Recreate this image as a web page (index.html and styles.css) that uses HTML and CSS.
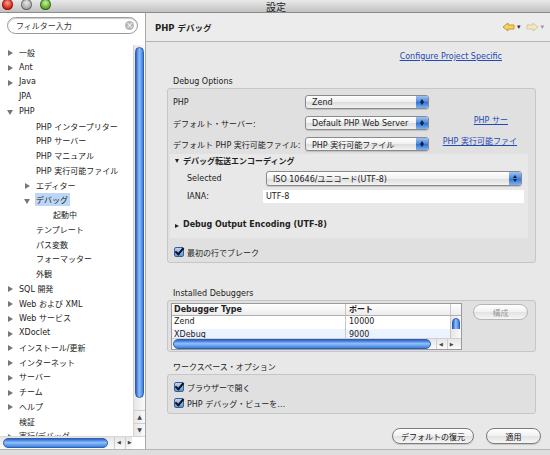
FILE: index.html
```html
<!DOCTYPE html>
<html>
<head>
    <title>設定</title>
    <meta charset="utf-8">
    <link rel="stylesheet" href="styles.css">
</head>
<body>
    <div class="window">
        <div class="titlebar">
            <div class="lights">
                <span class="light red"></span>
                <span class="light yellow"></span>
                <span class="light green"></span>
            </div>
            <div class="title">設定</div>
        </div>

        <div class="panes">
            <div class="sidebar">
                <div class="search">
                    <span class="search-text">フィルター入力</span>
                    <span class="search-clear">&times;</span>
                </div>

                <div class="tree-area">
                    <div class="tree">
                        <div class="row l0"><span class="arrow closed"></span><span class="label">一般</span></div>
                        <div class="row l0"><span class="arrow closed"></span><span class="label">Ant</span></div>
                        <div class="row l0"><span class="arrow closed"></span><span class="label">Java</span></div>
                        <div class="row l0"><span class="arrow"></span><span class="label">JPA</span></div>
                        <div class="row l0"><span class="arrow open"></span><span class="label">PHP</span></div>
                        <div class="row l1"><span class="arrow"></span><span class="label">PHP インタープリター</span></div>
                        <div class="row l1"><span class="arrow"></span><span class="label">PHP サーバー</span></div>
                        <div class="row l1"><span class="arrow"></span><span class="label">PHP マニュアル</span></div>
                        <div class="row l1"><span class="arrow"></span><span class="label">PHP 実行可能ファイル</span></div>
                        <div class="row l1"><span class="arrow closed"></span><span class="label">エディター</span></div>
                        <div class="row l1"><span class="arrow open"></span><span class="label selected">デバッグ</span></div>
                        <div class="row l2"><span class="arrow"></span><span class="label">起動中</span></div>
                        <div class="row l1"><span class="arrow"></span><span class="label">テンプレート</span></div>
                        <div class="row l1"><span class="arrow"></span><span class="label">パス変数</span></div>
                        <div class="row l1"><span class="arrow"></span><span class="label">フォーマッター</span></div>
                        <div class="row l1"><span class="arrow"></span><span class="label">外観</span></div>
                        <div class="row l0"><span class="arrow closed"></span><span class="label">SQL 開発</span></div>
                        <div class="row l0"><span class="arrow closed"></span><span class="label">Web および XML</span></div>
                        <div class="row l0"><span class="arrow closed"></span><span class="label">Web サービス</span></div>
                        <div class="row l0"><span class="arrow closed"></span><span class="label">XDoclet</span></div>
                        <div class="row l0"><span class="arrow closed"></span><span class="label">インストール/更新</span></div>
                        <div class="row l0"><span class="arrow closed"></span><span class="label">インターネット</span></div>
                        <div class="row l0"><span class="arrow closed"></span><span class="label">サーバー</span></div>
                        <div class="row l0"><span class="arrow closed"></span><span class="label">チーム</span></div>
                        <div class="row l0"><span class="arrow closed"></span><span class="label">ヘルプ</span></div>
                        <div class="row l0"><span class="arrow"></span><span class="label">検証</span></div>
                        <div class="row l0"><span class="arrow closed"></span><span class="label">実行/デバッグ</span></div>
                    </div>
                    <div class="vscroll">
                        <div class="vtrack"><div class="vthumb"></div></div>
                        <div class="sarrow">&#9650;</div>
                        <div class="sarrow">&#9660;</div>
                    </div>
                </div>

                <div class="hscroll">
                    <div class="htrack"><div class="hthumb"></div></div>
                    <div class="harrows"><span>&#9664;</span><span>&#9654;</span></div>
                    <div class="corner"></div>
                </div>
            </div>

            <div class="main">
                <div class="main-header">
                    <span class="page-title">PHP デバッグ</span>
                    <div class="nav">
                        <svg width="14" height="10" viewBox="0 0 14 10">
                            <path d="M1 5 L6 1 L6 3 L12 3 L12 7 L6 7 L6 9 Z" fill="#f6d36a" stroke="#c9972a" stroke-width="1"/>
                        </svg>
                        <span class="nav-drop">&#9662;</span>
                        <svg width="14" height="10" viewBox="0 0 14 10">
                            <path d="M13 5 L8 1 L8 3 L2 3 L2 7 L8 7 L8 9 Z" fill="#f3e7c6" stroke="#d8c79a" stroke-width="1"/>
                        </svg>
                        <span class="nav-drop faint">&#9662;</span>
                    </div>
                </div>

                <div class="content">
                    <div class="project-link"><a>Configure Project Specific</a></div>

                    <div class="group-title first">Debug Options</div>
                    <div class="group debug-group">
                        <div class="form-row">
                            <span class="form-label">PHP</span>
                            <div class="popup small"><span class="popup-text">Zend</span><span class="popup-btn"></span></div>
                        </div>
                        <div class="form-row">
                            <span class="form-label">デフォルト・サーバー:</span>
                            <div class="popup small"><span class="popup-text">Default PHP Web Server</span><span class="popup-btn"></span></div>
                            <a class="side-link first-link">PHP サー</a>
                        </div>
                        <div class="form-row">
                            <span class="form-label">デフォルト PHP 実行可能ファイル:</span>
                            <div class="popup small"><span class="popup-text">PHP 実行可能ファイル</span><span class="popup-btn"></span></div>
                            <a class="side-link">PHP 実行可能ファイ</a>
                        </div>

                        <div class="encoding">
                            <div class="section-head"><span class="tri-down"></span>デバッグ転送エンコーディング</div>
                            <div class="enc-row">
                                <span class="enc-label">Selected</span>
                                <div class="popup wide"><span class="popup-text">ISO 10646/ユニコード(UTF-8)</span><span class="popup-btn"></span></div>
                            </div>
                            <div class="enc-row">
                                <span class="enc-label">IANA:</span>
                                <div class="text-field">UTF-8</div>
                            </div>
                            <div class="section-head output"><span class="tri-right"></span>Debug Output Encoding (UTF-8)</div>
                        </div>

                        <div class="check-row"><span class="checkbox"></span>最初の行でブレーク</div>
                    </div>

                    <div class="group-title spaced">Installed Debuggers</div>
                    <div class="group debuggers">
                        <div class="table">
                            <div class="table-body">
                                <div class="trow thead">
                                    <span class="c1">Debugger Type</span>
                                    <span class="c2">ポート</span>
                                    <span class="c3"></span>
                                </div>
                                <div class="trow">
                                    <span class="c1">Zend</span>
                                    <span class="c2">10000</span>
                                    <span class="c3 tscroll"><span class="tthumb"></span></span>
                                </div>
                                <div class="trow alt">
                                    <span class="c1">XDebug</span>
                                    <span class="c2">9000</span>
                                    <span class="c3 tscroll"></span>
                                </div>
                            </div>
                            <div class="table-hscroll">
                                <div class="thtrack"><div class="ththumb"></div></div>
                                <div class="harrows"><span>&#9664;</span><span>&#9654;</span></div>
                            </div>
                        </div>
                        <button class="pill disabled config">構成</button>
                    </div>

                    <div class="group-title">ワークスペース・オプション</div>
                    <div class="group workspace">
                        <div class="check-row"><span class="checkbox"></span>ブラウザーで開く</div>
                        <div class="check-row"><span class="checkbox"></span>PHP デバッグ・ビューを…</div>
                    </div>

                    <div class="buttons">
                        <button class="pill restore">デフォルトの復元</button>
                        <button class="pill apply">適用</button>
                    </div>
                </div>
            </div>
        </div>
        <div class="bottom-strip"></div>
    </div>
</body>
</html>
```

FILE: styles.css
```css
body {
    margin: 0;
    font-family: "DejaVu Sans", "Noto Sans CJK JP", sans-serif;
    font-size: 8px;
    color: #222;
    background-color: #e0e0e0;
}

.window {
    width: 550px;
    height: 455px;
    display: flex;
    flex-direction: column;
    overflow: hidden;
}

/* title bar */
.titlebar {
    height: 13px;
    flex: none;
    display: flex;
    align-items: center;
    background: linear-gradient(#e9e9e9, #c2c2c2);
    border-bottom: 1px solid #8c8c8c;
    box-sizing: border-box;
}

.lights {
    display: flex;
    gap: 8px;
    margin-left: 2px;
    width: 120px;
    margin-top: -3px;
}

.light {
    width: 11px;
    height: 11px;
    border-radius: 50%;
    box-shadow: inset 0 0 0 1px rgba(0, 0, 0, 0.35);
}

.red {
    background: radial-gradient(circle at 50% 35%, #ff9a8a, #d8271a 60%, #8e120a);
}

.yellow {
    background: radial-gradient(circle at 50% 35%, #e8e8e8, #a9a9a9 60%, #7a7a7a);
}

.green {
    background: radial-gradient(circle at 50% 35%, #c8f39a, #5ba82a 60%, #2f6d0f);
}

.title {
    flex: 1;
    text-align: center;
    font-size: 10px;
    margin-right: 120px;
    color: #222;
}

.panes {
    flex: 1;
    display: flex;
    min-height: 0;
}

/* left side */
.sidebar {
    width: 145px;
    flex: none;
    background-color: #fff;
    border-right: 1px solid #a8a8a8;
    display: flex;
    flex-direction: column;
}

.search {
    margin: 4px 7px 0 7px;
    height: 15px;
    border: 1px solid #9a9a9a;
    border-radius: 9px;
    box-shadow: inset 0 1px 1px rgba(0, 0, 0, 0.2);
    display: flex;
    align-items: center;
    padding: 0 3px 0 8px;
}

.search-text {
    flex: 1;
    color: #333;
}

.search-clear {
    width: 9px;
    height: 9px;
    border-radius: 50%;
    background-color: #b8b8b8;
    color: #fff;
    font-size: 8px;
    line-height: 9px;
    text-align: center;
}

.tree-area {
    margin-top: 11px;
    flex: 1;
    display: flex;
    min-height: 0;
}

.tree {
    flex: 1;
    overflow: hidden;
}

.row {
    height: 14.75px;
    display: flex;
    align-items: center;
    white-space: nowrap;
}

.l1 {
    padding-left: 17px;
}

.l2 {
    padding-left: 34px;
}

.arrow {
    width: 18px;
    flex: none;
    position: relative;
    height: 14px;
}

.arrow.closed::before {
    content: "";
    position: absolute;
    left: 8px;
    top: 5px;
    border-left: 5px solid #777;
    border-top: 3px solid transparent;
    border-bottom: 3px solid transparent;
}

.arrow.open::before {
    content: "";
    position: absolute;
    left: 7px;
    top: 6px;
    border-top: 5px solid #777;
    border-left: 3px solid transparent;
    border-right: 3px solid transparent;
}

.label {
    padding: 1px 2px 1px 1px;
}

.label.selected {
    background-color: #bcd6f5;
}

.vscroll {
    width: 11px;
    flex: none;
    display: flex;
    flex-direction: column;
    border-left: 1px solid #d6d6d6;
    background: linear-gradient(90deg, #e6e6e6, #fafafa);
}

.vtrack {
    flex: 1;
    padding: 2px 1px 12px 1px;
    display: flex;
}

.vthumb {
    flex: 1;
    border-radius: 5px;
    border: 1px solid #2f5fb3;
    background: linear-gradient(90deg, #2a62d0, #8fc0f7 45%, #3d7fe2);
}

.sarrow {
    height: 12px;
    font-size: 6px;
    line-height: 12px;
    text-align: center;
    color: #444;
    border-top: 1px solid #cfcfcf;
}

.hscroll {
    height: 12px;
    flex: none;
    display: flex;
    background: linear-gradient(#e6e6e6, #fafafa);
    border-top: 1px solid #d6d6d6;
}

.htrack {
    width: 110px;
    padding: 1px 2px 1px 3px;
    display: flex;
}

.hthumb {
    flex: 1;
    border-radius: 5px;
    border: 1px solid #2f5fb3;
    background: linear-gradient(#2a62d0, #8fc0f7 45%, #3d7fe2);
}

.harrows {
    display: flex;
    gap: 4px;
    padding-left: 4px;
    font-size: 5px;
    line-height: 11px;
    color: #444;
}

.harrows span {
    border-left: 1px solid #cfcfcf;
    padding-left: 2px;
}

.corner {
    margin-left: auto;
    width: 14px;
    background-color: #fff;
}

/* right side */
.main {
    flex: 1;
    display: flex;
    flex-direction: column;
    background-color: #e8e8e8;
}

.main-header {
    height: 28px;
    flex: none;
    display: flex;
    align-items: center;
    padding: 0 6px 0 9px;
    border-bottom: 1px solid #b3b3b3;
    background-color: #ececec;
}

.page-title {
    flex: 1;
    font-weight: bold;
    font-size: 8.5px;
}

.nav {
    display: flex;
    align-items: center;
    gap: 1px;
}

.nav-drop {
    font-size: 7px;
    color: #333;
    margin-right: 4px;
}

.nav-drop.faint {
    color: #999;
    margin-right: 0;
}

.content {
    padding: 0 14px 0 21px;
}

.project-link {
    text-align: right;
    padding-right: 34px;
    margin-top: 9px;
    height: 12px;
    line-height: 12px;
}

a {
    color: #2549b5;
    text-decoration: underline;
}

.group-title {
    padding-left: 6px;
    height: 12px;
    line-height: 12px;
    margin-top: 10px;
    color: #222;
}

.group-title.first {
    margin-top: 13px;
}

.group-title.spaced {
    margin-top: 25px;
}

.group {
    background-color: #e0e0e0;
    border: 1px solid #c6c6c6;
    border-radius: 3px;
}

.debug-group {
    height: 175px;
    box-sizing: border-box;
    padding-top: 6px;
}

.form-row {
    display: flex;
    align-items: center;
    height: 14px;
    margin-bottom: 7px;
    padding-left: 5px;
}

.form-label {
    width: 132px;
    flex: none;
    white-space: nowrap;
}

.popup {
    height: 14px;
    box-sizing: border-box;
    border: 1px solid #8a8a8a;
    border-radius: 3px;
    background: linear-gradient(#ffffff, #f0f0f0 50%, #dcdcdc 51%, #f2f2f2);
    display: flex;
    align-items: center;
    box-shadow: 0 1px 1px rgba(0, 0, 0, 0.15);
}

.popup.small {
    width: 124px;
}

.popup.wide {
    width: 256px;
    height: 15px;
}

.popup-text {
    flex: 1;
    padding-left: 6px;
    white-space: nowrap;
    overflow: hidden;
}

.popup-btn {
    width: 12px;
    align-self: stretch;
    border-radius: 0 2px 2px 0;
    background: linear-gradient(#9fc3f2, #4a86dc 50%, #2e6fd0 51%, #7fb2f0);
    position: relative;
}

.popup-btn::before,
.popup-btn::after {
    content: "";
    position: absolute;
    left: 4px;
    border-left: 2px solid transparent;
    border-right: 2px solid transparent;
}

.popup-btn::before {
    top: 3px;
    border-bottom: 3px solid #102040;
}

.popup-btn::after {
    bottom: 3px;
    border-top: 3px solid #102040;
}

.side-link {
    margin-left: auto;
    margin-top: -8px;
    white-space: nowrap;
}

.first-link {
    margin-right: 27px;
}

.side-link:not(.first-link) {
    margin-right: 18px;
}

.encoding {
    margin: -4px 7px 0 2px;
    background-color: #e8e8e8;
    height: 84px;
}

.section-head {
    display: flex;
    align-items: center;
    height: 13px;
    font-weight: bold;
    padding-left: 5px;
    white-space: nowrap;
}

.tri-down {
    width: 0;
    height: 0;
    border-top: 4px solid #222;
    border-left: 2.5px solid transparent;
    border-right: 2.5px solid transparent;
    margin-right: 4px;
}

.tri-right {
    width: 0;
    height: 0;
    border-left: 4px solid #222;
    border-top: 2.5px solid transparent;
    border-bottom: 2.5px solid transparent;
    margin-right: 4px;
    margin-top: 3px;
}

.enc-row {
    display: flex;
    align-items: center;
    margin-top: 4px;
    padding-left: 17px;
}

.enc-row + .enc-row {
    margin-top: 4px;
}

.enc-label {
    width: 79px;
    flex: none;
}

.text-field {
    width: 261px;
    margin-left: -3px;
    height: 13px;
    line-height: 13px;
    background-color: #fff;
    padding-left: 3px;
    box-sizing: border-box;
}

.section-head.output {
    margin-top: 15px;
}

.check-row {
    display: flex;
    align-items: center;
    height: 14px;
    padding-left: 6px;
    white-space: nowrap;
}

.debug-group .check-row {
    margin-top: 7px;
}

.checkbox {
    width: 10px;
    height: 10px;
    box-sizing: border-box;
    border: 1px solid #3b5f9a;
    border-radius: 2px;
    background: linear-gradient(#b8d4f8, #5c95e3);
    margin-right: 3px;
    position: relative;
    flex: none;
}

.checkbox::after {
    content: "";
    position: absolute;
    left: 2px;
    top: -2px;
    width: 3px;
    height: 7px;
    border-right: 2px solid #111;
    border-bottom: 2px solid #111;
    transform: rotate(40deg);
}

.debuggers {
    height: 52px;
    box-sizing: border-box;
    display: flex;
    align-items: flex-start;
    padding: 2px 0 0 3px;
}

.table {
    width: 291px;
    height: 47px;
    box-sizing: border-box;
    border: 1px solid #9a9a9a;
    background-color: #fff;
    display: flex;
    flex-direction: column;
    overflow: hidden;
}

.table-body {
    flex: 1;
    overflow: hidden;
}

.trow {
    display: flex;
    height: 13px;
    line-height: 12px;
}

.trow.thead {
    height: 11px;
    line-height: 11px;
    font-weight: bold;
    border-bottom: 1px solid #b0b0b0;
    background: linear-gradient(#ffffff, #ececec);
}

.trow.alt {
    background-color: #edf3fe;
}

.c1 {
    width: 171px;
    padding-left: 2px;
    border-right: 1px solid #c8c8c8;
}

.c2 {
    flex: 1;
    padding-left: 3px;
    border-right: 1px solid #c8c8c8;
}

.c3 {
    width: 10px;
}

.tscroll {
    background: linear-gradient(90deg, #e6e6e6, #fafafa);
    position: relative;
}

.tthumb {
    position: absolute;
    left: 1px;
    top: 2px;
    width: 6px;
    height: 16px;
    border-radius: 4px;
    border: 1px solid #2f5fb3;
    background: linear-gradient(90deg, #2a62d0, #8fc0f7 45%, #3d7fe2);
}

.table-hscroll {
    height: 10px;
    flex: none;
    display: flex;
    background: linear-gradient(#e6e6e6, #fafafa);
    border-top: 1px solid #d0d0d0;
}

.thtrack {
    width: 258px;
    padding: 0 1px 0 1px;
    display: flex;
}

.ththumb {
    flex: 1;
    border-radius: 5px;
    border: 1px solid #2f5fb3;
    background: linear-gradient(#2a62d0, #8fc0f7 45%, #3d7fe2);
}

.table-hscroll .harrows {
    line-height: 10px;
}

.pill {
    font-family: inherit;
    font-size: 8px;
    height: 16px;
    border: 1px solid #7c7c7c;
    border-radius: 8px;
    background: linear-gradient(#ffffff, #f1f1f1 50%, #e2e2e2 51%, #f6f6f6);
    color: #111;
    padding: 0;
    box-shadow: 0 1px 1px rgba(0, 0, 0, 0.15);
}

.pill.disabled {
    color: #9a9a9a;
    border-color: #b5b5b5;
    box-shadow: none;
}

.config {
    width: 55px;
    margin-left: 11px;
    margin-top: 1px;
}

.workspace {
    height: 40px;
    box-sizing: border-box;
    padding-top: 5px;
}

.workspace .check-row + .check-row {
    margin-top: 2px;
}

.buttons {
    display: flex;
    justify-content: flex-end;
    gap: 12px;
    margin-top: 14px;
    margin-right: -5px;
}

.restore {
    width: 82px;
}

.apply {
    width: 55px;
}

.bottom-strip {
    height: 5px;
    flex: none;
    background-color: #dedede;
    border-top: 1px solid #b5b5b5;
}
```
